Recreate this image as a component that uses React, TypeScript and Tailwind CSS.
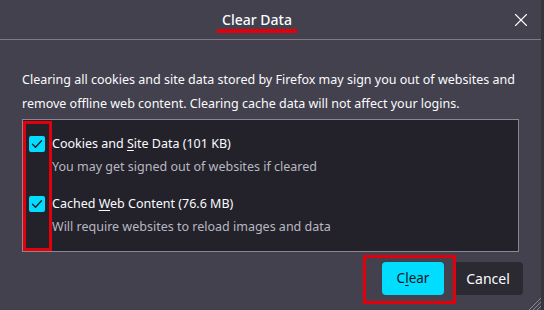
import { X } from "lucide-react";

function Check() {
  return (
    <span className="flex h-4 w-4 shrink-0 items-center justify-center rounded-[2px] bg-[#00ddff]">
      <svg viewBox="0 0 16 16" className="h-4 w-4" fill="none">
        <path d="M3.5 8.2l3 3 6-6.5" stroke="#1c1b22" strokeWidth="1.3" strokeLinecap="round" strokeLinejoin="round" />
      </svg>
    </span>
  );
}

function Option({ pre, accessKey, rest, hint }: { pre: string; accessKey: string; rest: string; hint: string }) {
  return (
    <div className="flex flex-col">
      <div className="flex items-center gap-[7px] leading-[22px]">
        <Check />
        <span className="text-[#fbfbfe]">
          {pre}
          <span className="underline underline-offset-2">{accessKey}</span>
          {rest}
        </span>
      </div>
      <div className="pl-[23px] leading-[23px] text-[#b8b8c0]">{hint}</div>
    </div>
  );
}

export default function App() {
  return (
    <div
      className="relative h-[310px] w-[544px] overflow-hidden border-r-[3px] border-[#36353d] bg-[#42414d] text-[12.5px] text-[#fbfbfe]"
      style={{ fontFamily: '"Noto Sans", "Open Sans", sans-serif' }}
    >
      {/* Header */}
      <div className="flex h-[40px] items-start border-b border-[#7d7c86] pr-[5px]">
        <div className="flex flex-1 justify-center pl-[8px] pt-[10px]">
          <div className="flex flex-col items-center">
            <span className="text-[14px] font-medium leading-[19px]">Clear Data</span>
            <span className="h-[4px] w-[80px] bg-[#e3000b]" />
          </div>
        </div>
        <button className="mt-[5px] flex h-[30px] w-[30px] items-center justify-center text-[#fbfbfe]">
          <X className="h-[22px] w-[22px]" strokeWidth={1.2} />
        </button>
      </div>

      {/* Body */}
      <div className="pl-[22px] pr-[18px] pt-[28px]">
        <p className="w-[500px] leading-[24px]">
          Clearing all cookies and site data stored by Firefox may sign you out of websites and remove offline web
          content. Clearing cache data will not affect your logins.
        </p>

        <div className="relative mt-[3px] flex w-[497px] flex-col gap-[15px] border border-[#8a8993] bg-[#23222b] py-[13px] pl-[6px]">
          <Option pre="Cookies and " accessKey="S" rest="ite Data (101 KB)" hint="You may get signed out of websites if cleared" />
          <Option pre="Cached " accessKey="W" rest="eb Content (76.6 MB)" hint="Will require websites to reload images and data" />
          <div className="absolute left-0 top-[1px] h-[130px] w-[29px] border-[3px] border-[#e3000b]" />
        </div>

        <div className="mt-[10px] flex justify-end gap-[9px]">
          <div className="relative">
            <button className="h-[33px] w-[62px] rounded-[4px] bg-[#00ddff] text-[13.5px] text-[#15141a]">
              C<span className="underline underline-offset-2">l</span>ear
            </button>
            <div className="absolute -left-[19px] -top-[7px] h-[49px] w-[93px] border-[3px] border-[#e3000b]" />
          </div>
          <button className="h-[33px] w-[70px] rounded-[4px] bg-[#2b2a33] text-[14px] text-[#fbfbfe]">Cancel</button>
        </div>
      </div>

      {/* Resize grip */}
      <svg className="absolute bottom-0 right-0 h-[14px] w-[14px]" viewBox="0 0 14 14">
        <path d="M14 2L2 14M14 6L6 14M14 10L10 14" stroke="#8a8993" strokeWidth="1" />
      </svg>
    </div>
  );
}
